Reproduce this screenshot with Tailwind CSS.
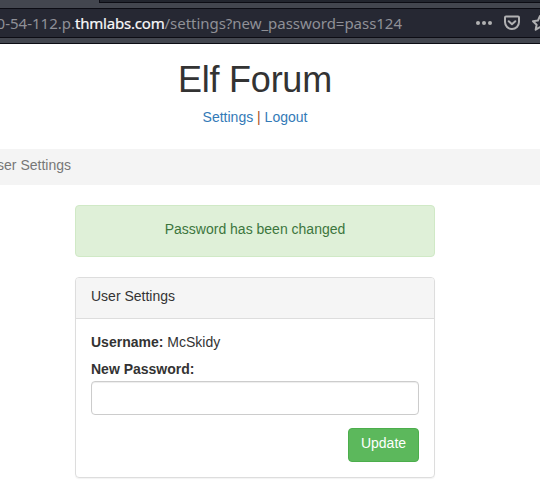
<!DOCTYPE html>
<html lang="en">
<head>
<meta charset="utf-8">
<title>Elf Forum</title>
<script src="https://cdn.jsdelivr.net/npm/@tailwindcss/browser@4"></script>
</head>
<body class="w-[540px] h-[498px] overflow-hidden bg-white font-['Liberation_Sans',Arial,sans-serif] text-[14px] leading-5 text-[#333333]">
  <div class="h-11 flex flex-col bg-[#43464f] border-b border-[#0c0c14]">
    <div class="h-[3px] shrink-0 ml-[99px] bg-[#22252e] border-b border-l border-[#0c0c14]"></div>
    <div class="mt-[5px] h-[30px] shrink-0 flex items-center bg-[#262833] border-y border-[#0c0c14] font-['Noto_Sans',sans-serif] text-[15px] text-[#8f9097] whitespace-nowrap overflow-hidden">
      <div class="w-[476px] shrink-0 flex">
        <span class="w-[75px] shrink-0 flex justify-end">0-54-112.p.</span><span class="text-[#f9f9fa] tracking-[-0.2px] [-webkit-text-stroke:0.2px_#f9f9fa]">thmlabs.com</span><span class="tracking-[-0.03px]">/settings?new_password=pass124</span>
      </div>
      <svg class="shrink-0" width="17" height="18" viewBox="0 0 17 18" fill="#b1b1b3"><circle cx="2" cy="9" r="2"/><circle cx="8" cy="9" r="2"/><circle cx="14" cy="9" r="2"/></svg>
      <svg class="shrink-0 ml-[10px]" width="18" height="18" viewBox="0 0 18 18" fill="none" stroke="#b1b1b3" stroke-width="2" stroke-linecap="round" stroke-linejoin="round"><path d="M3 2.500h12q1 0 1 1V8a7 7 0 0 1-14 0V3.500q0-1 1-1z"/><path d="M5.700 7.200 9 10.300l3.300-3.100"/></svg>
      <svg class="shrink-0 ml-[10px]" width="18" height="18" viewBox="0 0 18 18" fill="none" stroke="#b1b1b3" stroke-width="2" stroke-linejoin="round"><path d="m9 2 2.100 4.600 4.900.6-3.600 3.500.9 5L9 13.200l-4.300 2.500.9-5L2 7.200l4.900-.6z"/></svg>
    </div>
  </div>

  <header class="w-[510px] pt-4 flex flex-col items-center">
    <h1 class="text-[36px] leading-10 tracking-[-0.25px]">Elf Forum</h1>
    <p class="mt-[7px]"><a class="text-[#337ab7]">Settings</a> <span class="text-[#a94f20]">|</span> <a class="text-[#337ab7]">Logout</a></p>
  </header>
  <div class="mt-[22px] h-9 pt-[6px] bg-[#f4f4f4] text-[#777777] overflow-hidden">
    <div class="w-[71px] flex justify-end whitespace-nowrap">User Settings</div>
  </div>

  <main class="ml-[75px] mt-5 w-[360px]">
    <div class="h-[52px] pt-[13px] rounded-[4px] border border-[#d0e9c6] bg-[#dff0d8] text-[#3c763d] text-center">Password has been changed</div>
    <section class="mt-5 h-[201px] rounded-[4px] border border-[#dddddd] shadow-[0_1px_1px_rgba(0,0,0,0.05)]">
      <h2 class="h-[41px] pt-2 px-[15px] rounded-t-[3px] bg-[#f5f5f5] border-b border-[#dddddd]">User Settings</h2>
      <form class="px-[15px] pt-[13px] flex flex-col">
        <p><b>Username:</b> McSkidy</p>
        <label class="mt-[7px] font-bold" for="password">New Password:</label>
        <input id="password" type="password" class="mt-[2px] h-[34px] px-3 rounded-[4px] border border-[#cccccc] bg-white shadow-[inset_0_1px_1px_rgba(0,0,0,0.075)]">
        <button type="button" class="mt-[13px] self-end w-[71px] h-[34px] pb-1 rounded-[4px] border border-[#4cae4c] bg-[#5cb85c] text-white">Update</button>
      </form>
    </section>
  </main>
</body>
</html>
